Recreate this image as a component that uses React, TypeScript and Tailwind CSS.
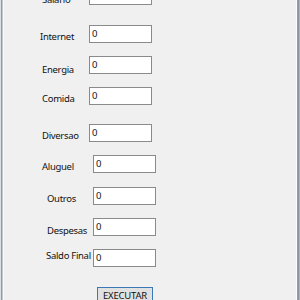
const rows = [
  { label: "Salario", h: 38, inputX: 85, labelX: 38, labelTop: 7 },
  { label: "Internet", h: 31, inputX: 85, labelX: 36, labelTop: 6 },
  { label: "Energia", h: 31, inputX: 85, labelX: 38, labelTop: 8 },
  { label: "Comida", h: 37, inputX: 85, labelX: 38, labelTop: 6 },
  { label: "Diversao", h: 31, inputX: 85, labelX: 38, labelTop: 6 },
  { label: "Aluguel", h: 32, inputX: 89, labelX: 38, labelTop: 6 },
  { label: "Outros", h: 31, inputX: 89, labelX: 43, labelTop: 6 },
  { label: "Despesas", h: 31, inputX: 89, labelX: 43, labelTop: 7 },
  { label: "Saldo Final", h: 38, inputX: 89, labelX: 42, labelTop: 1 },
];

function FieldRow({
  label,
  h,
  inputX,
  labelX,
  labelTop,
}: {
  label: string;
  h: number;
  inputX: number;
  labelX: number;
  labelTop: number;
}) {
  return (
    <div className="flex items-start" style={{ height: h }}>
      <div
        className="shrink-0 whitespace-nowrap text-[9.5px] leading-[12px] tracking-[-0.3px] text-[#111]"
        style={{ width: inputX, paddingLeft: labelX, marginTop: labelTop }}
      >
        {label}
      </div>
      <div className="flex h-[18px] w-[63px] items-start border border-[#8a8a8a] bg-white pl-[2px] pt-[2px] text-[9.5px] leading-[12px] text-[#111]">
        0
      </div>
    </div>
  );
}

export default function App() {
  return (
    <div
      className="flex h-[300px] w-[300px] overflow-hidden bg-[#f0f0f0]"
      style={{ fontFamily: '"Noto Sans", "Open Sans", sans-serif' }}
    >
      {/* left window frame */}
      <div className="w-px shrink-0 bg-[#dde1e6]" />
      <div className="w-px shrink-0 bg-[#8d99a8]" />
      <div className="w-px shrink-0 bg-[#c3cad3]" />
      <div className="w-px shrink-0 bg-[#fafafa]" />

      <div className="flex flex-1 flex-col">
        <div className="-mt-[13px] flex flex-col">
          {rows.map((r) => (
            <FieldRow key={r.label} {...r} />
          ))}
        </div>
        <div className="pl-[93px]">
          <div className="flex h-[22px] w-[56px] justify-center border border-[#3b78b6] bg-[#e1e1e1] pt-[2px] text-[9.5px] leading-[12px] tracking-[-0.2px] text-[#111]">
            EXECUTAR
          </div>
        </div>
      </div>

      {/* right window frame */}
      <div className="w-px shrink-0 bg-[#fbfbfb]" />
      <div className="w-px shrink-0 bg-[#9c9c9c]" />
      <div className="w-px shrink-0 bg-[#8b96a5]" />
      <div className="w-px shrink-0 bg-[#aab2bd]" />
    </div>
  );
}
